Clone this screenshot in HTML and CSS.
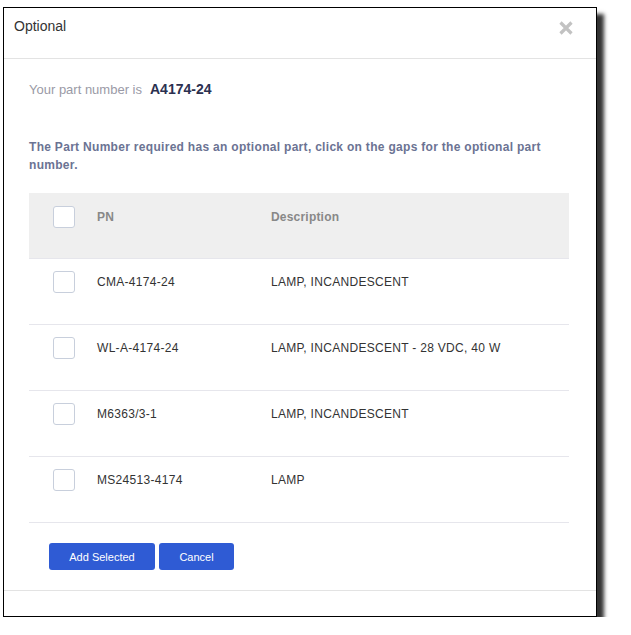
FILE: index.html
```html
<!DOCTYPE html>
<html>
<head>
<meta charset="utf-8">
<link rel="stylesheet" href="styles.css">
</head>
<body>
<div class="modal">
  <div class="modal-header">
    <span class="modal-title">Optional</span>
    <svg class="close" width="14" height="14" viewBox="0 0 14 14"><path d="M1.5 1.5 L12.5 12.5 M12.5 1.5 L1.5 12.5" stroke="#c2c2c2" stroke-width="3.2" stroke-linecap="butt" fill="none"/></svg>
  </div>
  <div class="modal-body">
    <div class="part-line"><span class="part-label">Your part number is</span><span class="part-num">A4174-24</span></div>
    <p class="note">The Part Number required has an optional part, click on the gaps for the optional part number.</p>
    <div class="table">
      <div class="row head">
        <div class="cell-check"><span class="box"></span></div>
        <div class="cell-pn">PN</div>
        <div class="cell-desc">Description</div>
      </div>
      <div class="row">
        <div class="cell-check"><span class="box"></span></div>
        <div class="cell-pn">CMA-4174-24</div>
        <div class="cell-desc">LAMP, INCANDESCENT</div>
      </div>
      <div class="row">
        <div class="cell-check"><span class="box"></span></div>
        <div class="cell-pn">WL-A-4174-24</div>
        <div class="cell-desc">LAMP, INCANDESCENT - 28 VDC, 40 W</div>
      </div>
      <div class="row">
        <div class="cell-check"><span class="box"></span></div>
        <div class="cell-pn">M6363/3-1</div>
        <div class="cell-desc">LAMP, INCANDESCENT</div>
      </div>
      <div class="row">
        <div class="cell-check"><span class="box"></span></div>
        <div class="cell-pn">MS24513-4174</div>
        <div class="cell-desc">LAMP</div>
      </div>
    </div>
    <div class="actions">
      <button class="btn">Add Selected</button>
      <button class="btn btn-cancel">Cancel</button>
    </div>
  </div>
  <div class="modal-footer"></div>
</div>
</body>
</html>
```
FILE: styles.css
```css
html, body {
  margin: 0;
  padding: 0;
  background: #ffffff;
}
body {
  font-family: "Liberation Sans", Arial, sans-serif;
  padding: 7px 0 0 3px;
}
.modal {
  width: 594px;
  height: 610px;
  box-sizing: border-box;
  border: 1px solid #000;
  background: #fff;
  box-shadow: 7px 7px 4px rgba(0, 0, 0, 0.8);
  display: flex;
  flex-direction: column;
}
.modal-header {
  height: 50px;
  border-bottom: 1px solid #e3e3e3;
  display: flex;
  align-items: flex-start;
  justify-content: space-between;
  padding: 0 23px 0 10px;
  flex: none;
}
.modal-title {
  font-size: 14px;
  color: #333;
  line-height: 20px;
  margin-top: 8px;
}
.close {
  margin-top: 13px;
  display: block;
}
.modal-body {
  padding: 20px 27px 0 25px;
  flex: 1;
  border-bottom: 1px solid #e3e3e3;
}
.part-line {
  line-height: 20px;
  display: flex;
  align-items: baseline;
}
.part-label {
  font-size: 13px;
  color: #9a9aa6;
}
.part-num {
  font-size: 14px;
  font-weight: bold;
  color: #2b3050;
  margin-left: 8px;
}
.note {
  margin: 38px 0 0;
  font-size: 12px;
  font-weight: bold;
  line-height: 18px;
  letter-spacing: 0.3px;
  color: #6b7393;
}
.table {
  margin-top: 19px;
  border-bottom: 1px solid #e6e6ec;
}
.row {
  display: flex;
  align-items: center;
  height: 66px;
  box-sizing: border-box;
  padding-bottom: 19px;
  border-top: 1px solid #e6e6ec;
  font-size: 12px;
  letter-spacing: 0.3px;
  color: #333;
}
.row.head {
  height: 65px;
  border-top: none;
  background: #efefef;
  padding-bottom: 18px;
  font-weight: bold;
  color: #888;
  letter-spacing: 0.2px;
}
.cell-check {
  width: 68px;
  padding-left: 24px;
  box-sizing: border-box;
  display: flex;
}
.box {
  width: 22px;
  height: 22px;
  box-sizing: border-box;
  border: 1px solid #c8cfdc;
  border-radius: 3px;
  background: #fff;
}
.cell-pn {
  width: 174px;
}
.cell-desc {
  flex: 1;
}
.actions {
  margin-top: 20px;
  padding-left: 20px;
  display: flex;
  gap: 4px;
}
.btn {
  height: 27px;
  padding: 0;
  border: none;
  border-radius: 3px;
  background: #2f5bd4;
  color: #fff;
  font-family: "Liberation Sans", Arial, sans-serif;
  font-size: 11px;
  width: 106px;
}
.btn-cancel {
  width: 75px;
}
.modal-footer {
  height: 25px;
  flex: none;
}
```
